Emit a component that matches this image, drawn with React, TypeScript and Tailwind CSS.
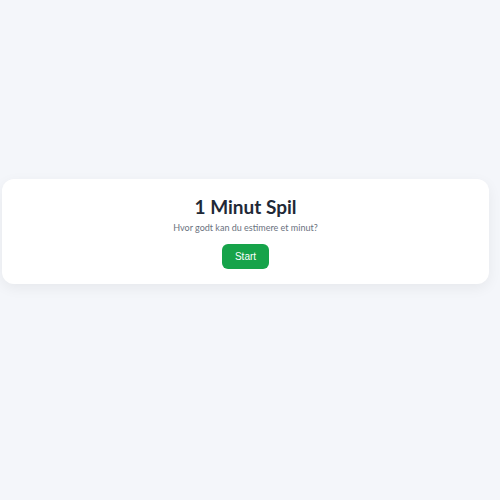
export default function App() {
  return (
    <div className="min-h-screen w-full bg-[#f4f6fa] pt-[179px]" style={{ fontFamily: 'Lato, sans-serif' }}>
      <div className="ml-[2px] w-[487px] rounded-xl bg-white px-6 pt-[15px] pb-[15px] text-center shadow-[0_4px_14px_rgba(0,0,0,0.06)]">
        <h1 className="text-[19px] font-bold leading-[25px] text-[#1f2937]">1 Minut Spil</h1>
        <p className="mt-[2px] text-[9px] leading-[13px] text-[#6b7280]">Hvor godt kan du estimere et minut?</p>
        <button className="mt-[10px] h-[25px] w-[47px] rounded-md bg-[#16a34a] text-[10px] text-white" style={{ fontFamily: '"Liberation Sans", Arial, sans-serif' }}>
          Start
        </button>
      </div>
    </div>
  );
}
